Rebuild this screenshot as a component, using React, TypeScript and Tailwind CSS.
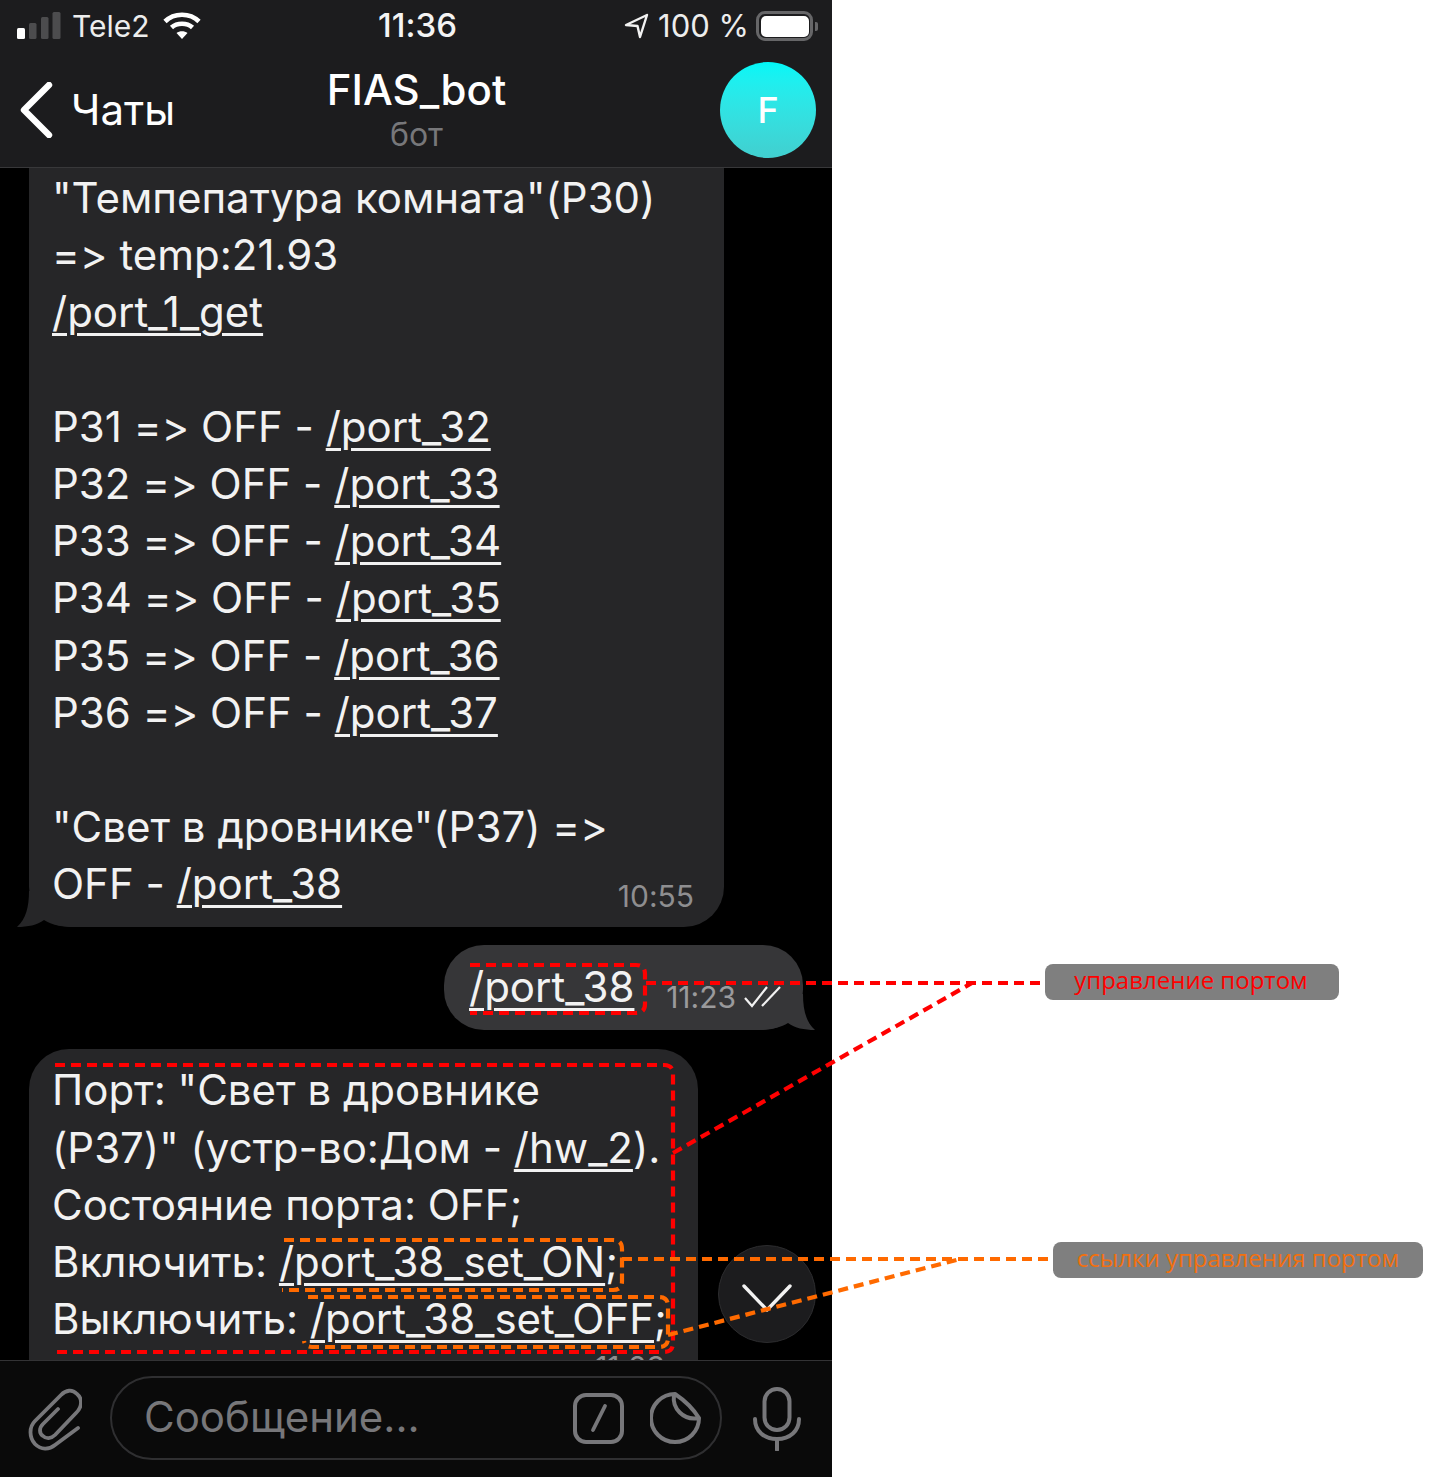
import React from "react";

const Link = ({ children }: { children: React.ReactNode }) => (
  <span className="underline decoration-[3px] underline-offset-[6px]">{children}</span>
);

const Line = ({ children }: { children?: React.ReactNode }) => (
  <div className="relative h-[57.2px] leading-[57.2px] whitespace-nowrap">{children}</div>
);

const Port = ({ p, to }: { p: string; to: string }) => (
  <Line>
    {p} =&gt; OFF - <Link>{to}</Link>
  </Line>
);

const SignalIcon = () => (
  <svg width="44" height="30" viewBox="0 0 44 30">
    <rect x="0" y="17" width="8" height="11" rx="1.5" fill="#fff" />
    <rect x="12" y="12" width="7.5" height="16" rx="1.5" fill="#4c4c4e" />
    <rect x="24" y="6" width="7.5" height="22" rx="1.5" fill="#4c4c4e" />
    <rect x="35.5" y="1" width="8" height="27" rx="1.5" fill="#4c4c4e" />
  </svg>
);

const WifiIcon = () => (
  <svg width="38" height="30" viewBox="0 0 38 30" fill="none" stroke="#fff" strokeWidth="4.6">
    <path d="M2 10.5C11 1.5 27 1.5 36 10.5" />
    <path d="M8.5 16.5C14 11.5 24 11.5 29.5 16.5" />
    <path d="M19 28L13.5 22C16.5 19.6 21.5 19.6 24.5 22Z" fill="#fff" stroke="none" />
  </svg>
);

const LocationIcon = () => (
  <svg width="25" height="26" viewBox="14 14 25 26" fill="none" stroke="#f2f2f2" strokeWidth="2.4" strokeLinejoin="round">
    <path d="M37 16L16 26L27.5 27L30 38Z" />
  </svg>
);

const BatteryIcon = () => (
  <div className="flex items-center gap-[2px]">
    <div className="w-[57px] h-[30px] rounded-[9px] border-[3px] border-[#666668] p-[1.5px]">
      <div className="w-full h-full rounded-[5px] bg-white" />
    </div>
    <div className="w-[3px] h-[9px] rounded-r-[2px] bg-[#666668]" />
  </div>
);

const BackIcon = () => (
  <svg width="34" height="56" viewBox="0 0 34 56" fill="none" stroke="#fff" strokeWidth="6.4" strokeLinecap="round" strokeLinejoin="round">
    <path d="M29 3L4 28L29 53" />
  </svg>
);

const LeftTail = ({ color }: { color: string }) => (
  <svg className="absolute left-[-12px] bottom-0" width="60" height="36" viewBox="0 0 60 36" fill={color}>
    <path d="M12 0C12 16 9 28 0 36C11 36 20 34 27 29C35 34 45 36 60 36L60 0Z" />
  </svg>
);

const RightTail = ({ color }: { color: string }) => (
  <svg className="absolute right-[-12px] bottom-0" width="60" height="36" viewBox="0 0 60 36" fill={color}>
    <path d="M48 0C48 16 51 28 60 36C49 36 40 34 33 29C25 34 15 36 0 36L0 0Z" />
  </svg>
);

const ChecksIcon = () => (
  <svg width="38" height="24" viewBox="0 0 38 24" fill="none" stroke="#f2f2f2" strokeWidth="2.2">
    <path d="M1 13L8 21L23 2" />
    <path d="M18 21L36 2" />
  </svg>
);

const ClipIcon = () => (
  <svg width="54" height="66" viewBox="8 12 54 66" fill="none" stroke="#77777a" strokeWidth="3.8" strokeLinecap="round" strokeLinejoin="round">
    <path d="M38 35L23 50C19 54 19 59 23 62C26 65 31 65 35 61L56 39C63 32 62 24 57 20C52 15 46 16 41 21L15 47C9 53 9 63 15 70C21 76 29 76 35 71L58 54" />
  </svg>
);

const CommandIcon = () => (
  <div className="w-[51px] h-[51px] rounded-[13px] border-[4px] border-[#77777a] flex items-center justify-center">
    <svg width="20" height="30" viewBox="0 0 20 30" fill="none" stroke="#77777a" strokeWidth="3.8" strokeLinecap="round">
      <path d="M16 3L4 27" />
    </svg>
  </div>
);

const StickerIcon = () => (
  <svg width="52" height="52" viewBox="0 0 52 52" fill="none" stroke="#77777a" strokeWidth="4" strokeLinejoin="round">
    <path d="M25 2A24 24 0 1 0 49 26C42 15 34 8 25 2Z" />
    <path d="M24 3C22 16 33 29 49 26" />
  </svg>
);

const MicIcon = () => (
  <svg width="48" height="64" viewBox="0 0 48 64" fill="none" stroke="#77777a" strokeWidth="4" strokeLinecap="round">
    <rect x="11.5" y="2" width="25" height="41" rx="12.5" />
    <path d="M2 32C2 44 11 52 24 52C37 52 46 44 46 32" />
    <path d="M24 52V63" />
  </svg>
);

const Annotations = () => (
  <svg className="absolute left-0 top-0 pointer-events-none" width="1441" height="1477" viewBox="0 0 1441 1477" fill="none">
    <g stroke="#ff0000" strokeWidth="4.2" strokeDasharray="10 6">
      <path d="M470 965H636Q645 965 645 974V1004Q645 1013 636 1013H470" />
      <path d="M55 1065H664Q673 1065 673 1074V1343Q673 1352 664 1352H55" />
      <path d="M646 983H1045" />
      <path d="M673 1153L972 983" />
    </g>
    <g stroke="#ff6a00" strokeWidth="4.2" strokeDasharray="10 6">
      <path d="M284 1240H613Q622 1240 622 1249V1281Q622 1290 613 1290H282" />
      <path d="M308 1297H659Q668 1297 668 1306V1338Q668 1347 659 1347H312Q305 1347 304 1341" />
      <path d="M622 1259H1053" />
      <path d="M668 1335L960 1259" />
    </g>
  </svg>
);

export default function App() {
  return (
    <div className="relative w-[1441px] h-[1477px] bg-white overflow-hidden font-['Inter',sans-serif] [font-variant-ligatures:none] [font-feature-settings:'calt'_0]">
      <div className="relative w-[832px] h-[1477px] bg-black flex flex-col text-white">
        <header className="h-[168px] shrink-0 bg-[#1c1c1e] border-b border-[#38383a] flex flex-col">
          <div className="h-[52px] pl-[17px] pr-[14px] flex items-center justify-between">
            <div className="flex-1 flex items-center">
              <SignalIcon />
              <span className="ml-[11px] text-[30px] text-[#ededed]">Tele2</span>
              <span className="ml-[13px] flex"><WifiIcon /></span>
            </div>
            <span className="text-[33px] font-medium text-[#f4f4f4]">11:36</span>
            <div className="flex-1 flex items-center justify-end">
              <LocationIcon />
              <span className="ml-[9px] text-[31px] text-[#ededed]">100 %</span>
              <span className="ml-[7px] flex"><BatteryIcon /></span>
            </div>
          </div>
          <div className="flex-1 grid grid-cols-[1fr_auto_1fr] items-center pl-[20px] pr-[16px]">
            <div className="flex items-center gap-[17px]">
              <BackIcon />
              <span className="text-[42px]">Чаты</span>
            </div>
            <div className="flex flex-col items-center -mt-[1px] pr-[3px]">
              <span className="text-[42px] font-medium leading-[50px]">FIAS_bot</span>
              <span className="text-[32px] leading-[39px] text-[#77777a]">бот</span>
            </div>
            <div className="justify-self-end w-[96px] h-[96px] rounded-full bg-gradient-to-b from-[#00f7f7] to-[#41cfcf] flex items-center justify-center text-[36px] font-medium">
              F
            </div>
          </div>
        </header>

        <main className="relative flex-1 min-h-0 overflow-hidden flex flex-col text-[42px] text-[#f2f2f2]">
          <section className="relative shrink-0 ml-[29px] w-[695px] bg-[#262628] rounded-b-[40px] pl-[23px] pt-[1px] pb-[15px]">
            <Line>"Темпепатура комната"(P30)</Line>
            <Line>=&gt; temp:21.93</Line>
            <Line><Link>/port_1_get</Link></Line>
            <Line />
            <Port p="P31" to="/port_32" />
            <Port p="P32" to="/port_33" />
            <Port p="P33" to="/port_34" />
            <Port p="P34" to="/port_35" />
            <Port p="P35" to="/port_36" />
            <Port p="P36" to="/port_37" />
            <Line />
            <Line>"Свет в дровнике"(P37) =&gt;</Line>
            <div className="relative z-10 h-[57.2px] leading-[57.2px] flex items-end justify-between pr-[30px] whitespace-nowrap">
              <span>OFF - <Link>/port_38</Link></span>
              <span className="text-[30px] leading-[34px] text-[#8e8e90] -mb-[1px]">10:55</span>
            </div>
            <LeftTail color="#262628" />
          </section>

          <section className="relative shrink-0 self-end mt-[18px] mr-[29px] w-[359px] h-[85px] bg-[#363638] rounded-[40px] pl-[25px] pr-[21px] flex items-center">
            <span className="relative z-10 leading-[57px] -mt-[3px]"><Link>/port_38</Link></span>
            <span className="relative z-10 ml-auto flex items-center gap-[8px] mt-[19px]">
              <span className="text-[30px] leading-[34px] text-[#9a9a9c]">11:23</span>
              <ChecksIcon />
            </span>
            <RightTail color="#363638" />
          </section>

          <section className="shrink-0 mt-[19px] ml-[29px] w-[669px] bg-[#262628] rounded-t-[40px] pl-[23px] pt-[12px]">
            <Line>Порт: "Свет в дровнике</Line>
            <Line>(P37)" (устр-во:Дом - <Link>/hw_2</Link>).</Line>
            <Line>Состояние порта: OFF;</Line>
            <Line>Включить: <Link>/port_38_set_ON</Link>;</Line>
            <Line>Выключить: <Link>/port_38_set_OFF</Link>;</Line>
            <div className="flex justify-end pr-[33px] pt-[3px] text-[30px] leading-[34px] text-[#8e8e90]">11:23</div>
          </section>

          <div className="absolute left-[718px] top-[1077px] w-[98px] h-[98px] rounded-full bg-[#1c1c1e] border border-[#2c2c2e] flex items-center justify-center">
            <svg className="mt-[8px]" width="52" height="30" viewBox="0 0 52 30" fill="none" stroke="#f2f2f2" strokeWidth="3.4" strokeLinecap="round" strokeLinejoin="round">
              <path d="M3 3L26 27L49 3" />
            </svg>
          </div>
        </main>

        <footer className="h-[117px] shrink-0 bg-[#0a0a0a] border-t border-[#333335] flex items-center pl-[28px] pr-[31px]">
          <ClipIcon />
          <div className="ml-[28px] w-[612px] h-[84px] -mt-[2px] rounded-[42px] border-2 border-[#2f2f31] flex items-center pl-[32px] pr-[18px]">
            <span className="text-[42px] -mt-[3px] text-[#77777a]">Сообщение...</span>
            <span className="ml-auto flex items-center gap-[26px]">
              <CommandIcon />
              <StickerIcon />
            </span>
          </div>
          <span className="ml-auto flex"><MicIcon /></span>
        </footer>
      </div>

      <Annotations />

      <div className="absolute left-[1045px] top-[964px] w-[294px] h-[36px] rounded-[8px] bg-[#7f7f7f] flex items-center justify-center pb-[4px] pr-[2px] font-['Open_Sans',sans-serif] text-[24px] text-[#ff0000] whitespace-nowrap">
        управление портом
      </div>
      <div className="absolute left-[1053px] top-[1242px] w-[370px] h-[36px] rounded-[8px] bg-[#7f7f7f] flex items-center justify-center pb-[4px] font-['Open_Sans',sans-serif] text-[24px] text-[#f2700f] whitespace-nowrap">
        ссылки управления портом
      </div>
    </div>
  );
}
